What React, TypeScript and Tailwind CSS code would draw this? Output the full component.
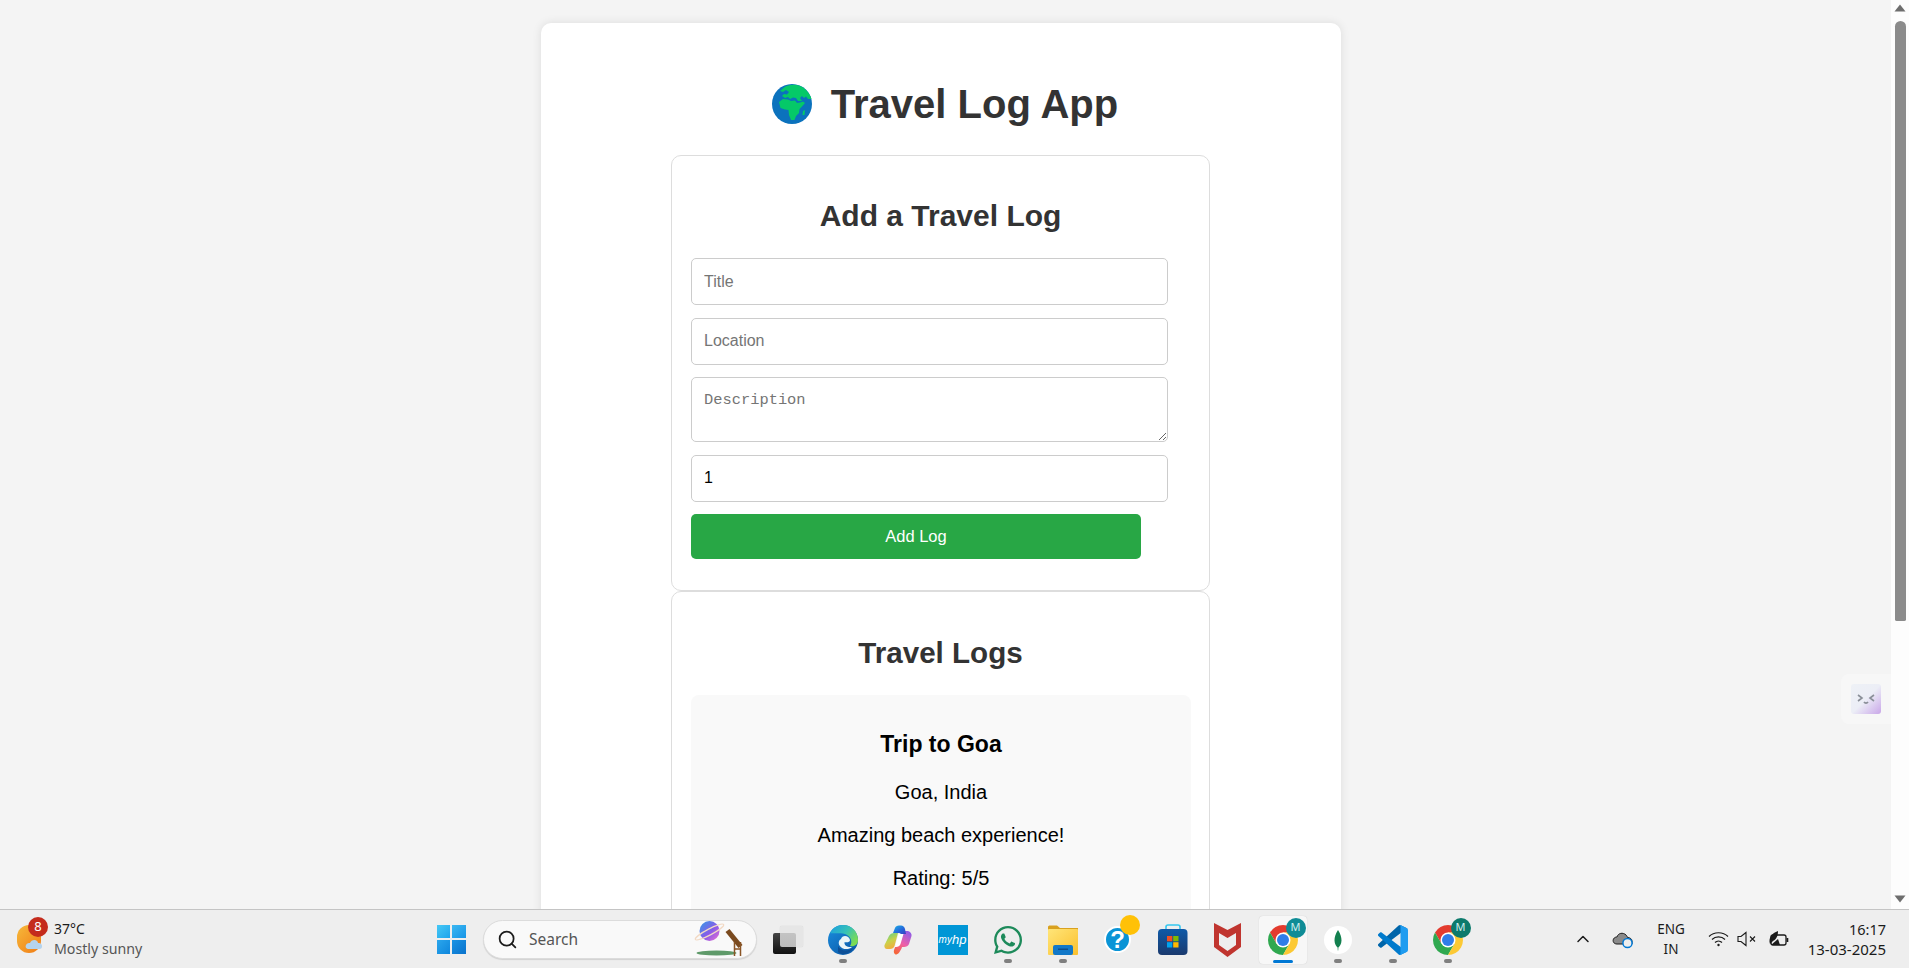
import { ChevronUp, Search } from 'lucide-react';
import { FaWhatsapp } from 'react-icons/fa';

function Globe() {
  return (
    <svg width="40" height="40" viewBox="0 0 40 40" className="shrink-0">
      <circle cx="20" cy="20" r="20" fill="#0b72bd" />
      <path
        d="M12 3.5 C17 0 27 -.5 33 5 C36 8 38.5 11 39.5 15 L36 15 L34 12.5 L32 14 L30 12 L28 14 L30 17 L26 17 L24 14 L21 13.5 L18 15 L16 13 L13 14 L10 12 L12 10 L15 10.5 L17 8 L14 6 L11 8 L8 7 Z"
        fill="#05c968"
      />
      <path
        d="M7 18 L11 15 L16 15.5 L19 17 L23 16.5 L25 19 L28 18.5 L31 17.5 L33 19 L30 22.5 L27.5 25 L27 29 L24 32 L22.5 36 L19 36 L17 31 L16.5 26 L13 25.5 L8.5 24 Z"
        fill="#05c968"
      />
      <path d="M31 27 L33 26 L32.5 31 L30.5 31 Z" fill="#05c968" />
    </svg>
  );
}

function Chrome({ size = 30 }: { size?: number }) {
  return (
    <svg width={size} height={size} viewBox="2 2 44 44">
      <path d="M4.95 13 A22 22 0 0 1 43.05 13 L24 13 L14.47 29.5 Z" fill="#e33b2e" />
      <path d="M4.95 13 L14.47 29.5 L33.53 29.5 L24 46 A22 22 0 0 1 4.95 13 Z" fill="#2fa84f" />
      <path d="M43.05 13 L24 13 L33.53 29.5 L24 46 A22 22 0 0 0 43.05 13 Z" fill="#fcc934" />
      <circle cx="24" cy="24" r="11" fill="#fff" />
      <circle cx="24" cy="24" r="8.8" fill="#2f7de8" />
    </svg>
  );
}

function VsCode() {
  return (
    <svg width="30" height="30" viewBox="0 0 100 100">
      <path
        d="M96.46 10.8 L75.86 .87 C73.47 -.28 70.62 .2 68.75 2.08 L1.3 63.58 C-.52 65.23 -.52 68.09 1.31 69.75 L6.82 74.75 C8.3 76.1 10.53 76.2 12.12 75 L93.39 13.35 C96.11 11.28 100 13.22 100 16.64 V16.4 C100 14 98.62 11.83 96.46 10.8 Z"
        fill="#0065a9"
      />
      <path
        d="M96.46 89.2 L75.86 99.13 C73.47 100.28 70.62 99.8 68.75 97.92 L1.3 36.42 C-.52 34.77 -.52 31.91 1.31 30.25 L6.82 25.25 C8.3 23.9 10.53 23.8 12.12 25 L93.39 86.65 C96.11 88.72 100 86.78 100 83.36 V83.6 C100 86 98.62 88.17 96.46 89.2 Z"
        fill="#007acc"
      />
      <path
        d="M75.86 99.13 C73.47 100.28 70.62 99.8 68.75 97.92 C71.06 100.23 75 98.6 75 95.33 V4.67 C75 1.4 71.06 -.23 68.75 2.08 C70.62 .2 73.47 -.28 75.86 .87 L96.46 10.78 C98.62 11.82 100 14 100 16.4 V83.6 C100 86 98.62 88.17 96.46 89.2 Z"
        fill="#1f9cf0"
      />
    </svg>
  );
}

function Edge() {
  return (
    <svg width="30" height="30" viewBox="0 0 30 30">
      <defs>
        <linearGradient id="edgeTop" x1="0" y1="0" x2="1" y2="0.6">
          <stop offset="0" stopColor="#1b9de2" />
          <stop offset="0.55" stopColor="#35c1b8" />
          <stop offset="1" stopColor="#7bdc55" />
        </linearGradient>
        <linearGradient id="edgeLeft" x1="0" y1="0" x2="0.7" y2="1">
          <stop offset="0" stopColor="#1a8fe0" />
          <stop offset="1" stopColor="#0b5cab" />
        </linearGradient>
      </defs>
      <circle cx="15" cy="15" r="15" fill="url(#edgeLeft)" />
      <path d="M2 8 C5 1 12 0 15 0 C24 0 30 7 30 15 C30 20 26 22 22 21 C25 17 23 10 15 8.5 C9 7.5 4 9 2 8 Z" fill="url(#edgeTop)" />
      <path d="M13 14 C14 9.5 21 10 22 15 C22 17.5 19 17.5 16.5 17.2 C16 20 19 22.5 24 22 C21 25 14 25 11.5 20.5 C10 18 11 15 13 14 Z" fill="#eaf5f8" />
      <path d="M10 21 C12 26 19 27 25.5 23 C22 29 14 31 10 27 Z" fill="#0d4f96" />
    </svg>
  );
}

function Copilot() {
  return (
    <svg width="28" height="30" viewBox="0 0 28 30">
      <defs>
        <linearGradient id="copA" x1="0" y1="0" x2="1" y2="1">
          <stop offset="0" stopColor="#19b3e6" />
          <stop offset="0.6" stopColor="#2563d9" />
          <stop offset="1" stopColor="#3b3fc0" />
        </linearGradient>
        <linearGradient id="copB" x1="0.2" y1="0" x2="0.6" y2="1">
          <stop offset="0" stopColor="#5fcf8a" />
          <stop offset="0.5" stopColor="#c9d24a" />
          <stop offset="1" stopColor="#f7a83c" />
        </linearGradient>
        <linearGradient id="copC" x1="0.8" y1="0" x2="0.3" y2="1">
          <stop offset="0" stopColor="#8f5be8" />
          <stop offset="0.55" stopColor="#ee5fa8" />
          <stop offset="1" stopColor="#f5663a" />
        </linearGradient>
      </defs>
      <path d="M5 11 C6 9 8 8 10 8 L14 8 L10.5 21 C10 23 8 24 6 24 L3 24 C1 24 0 22 .5 20 Z" fill="url(#copB)" />
      <path d="M18 22 C17.5 24 15 29 12.5 29.5 L11.5 29.5 C10 29 9.5 27 10 25 L12 20 L21 6 L24 6 C26.5 6.5 28 9 27.5 11 L25 19 C24.5 21 22 22 20 22 Z" fill="url(#copC)" />
      <path d="M9 8 L11 3 C11.5 1.5 13 .5 15 .5 L17 .5 C19 .5 20.5 2 21 4 L22 9 L17 9 L15.5 8 Z" fill="url(#copA)" />
      <path d="M14.5 9 L19.5 9 L16.5 19 C16 21 14 22 12 22 L10.8 22 Z" fill="#fff" />
    </svg>
  );
}

function Folder() {
  return (
    <svg width="30" height="30" viewBox="0 0 30 30">
      <defs>
        <linearGradient id="fold" x1="0" y1="0" x2="1" y2="1">
          <stop offset="0" stopColor="#ffe579" />
          <stop offset="1" stopColor="#fbc02d" />
        </linearGradient>
      </defs>
      <path d="M0 2 C0 1 1 .5 2 .5 H9 L12 3 H30 V6 H0 Z" fill="#d9a11f" />
      <rect x="0" y="4" width="30" height="26" rx="1" fill="url(#fold)" />
      <rect x="5" y="20" width="20" height="10" rx="2" fill="#1278c8" />
      <rect x="10" y="23.5" width="10" height="1.5" fill="#0b4f8f" />
    </svg>
  );
}

function Store() {
  return (
    <svg width="30" height="32" viewBox="0 0 30 32">
      <defs>
        <linearGradient id="bag" x1="0" y1="0" x2="0" y2="1">
          <stop offset="0" stopColor="#0f5aa8" />
          <stop offset="1" stopColor="#1a3a6e" />
        </linearGradient>
      </defs>
      <path d="M8 7 V3 C8 1.5 9 1 10 1 H20 C21 1 22 1.5 22 3 V7" fill="none" stroke="#35c7f0" strokeWidth="1.6" />
      <rect x="0" y="5" width="29.5" height="26" rx="4" fill="url(#bag)" />
      <rect x="9" y="12" width="5.3" height="5.3" fill="#f25022" />
      <rect x="15.2" y="12" width="5.3" height="5.3" fill="#7fba00" />
      <rect x="9" y="18.2" width="5.3" height="5.3" fill="#00a4ef" />
      <rect x="15.2" y="18.2" width="5.3" height="5.3" fill="#ffb900" />
    </svg>
  );
}

function Shield() {
  return (
    <svg width="27" height="34" viewBox="0 0 27 34">
      <path d="M0 0 L13.5 7 L27 0 V24 L13.5 34 L0 24 Z" fill="#c0352f" />
      <path d="M5 10 L13.5 15 L22 10 V22 L13.5 28 L5 22 Z" fill="#eeeeee" />
    </svg>
  );
}

function Mongo() {
  return (
    <svg width="28" height="28" viewBox="0 0 28 28">
      <circle cx="14" cy="14" r="14" fill="#fff" />
      <path d="M14 4 C16.5 8 17.5 11 17.5 14.5 C17.5 18 15.5 20.5 14.4 21.5 L14.2 24.5 H13.8 L13.6 21.5 C12.5 20.5 10.5 18 10.5 14.5 C10.5 11 11.5 8 14 4 Z" fill="#13804f" />
    </svg>
  );
}

function Planet() {
  return (
    <svg width="53" height="38" viewBox="0 0 50 38">
      <defs>
        <linearGradient id="pl" x1="0" y1="0" x2="1" y2="1">
          <stop offset="0" stopColor="#2f9be6" />
          <stop offset="0.55" stopColor="#8a5be8" />
          <stop offset="1" stopColor="#ef6fd0" />
        </linearGradient>
      </defs>
      <ellipse cx="22" cy="33" rx="20" ry="2.5" fill="#5f9a6a" />
      <circle cx="15" cy="11" r="10" fill="url(#pl)" />
      <ellipse cx="15" cy="12" rx="16" ry="3" fill="none" stroke="#f2d9c4" strokeWidth="1.2" transform="rotate(-28 15 12)" />
      <path d="M31 12 L35 9 L48 25 L44 28 Z" fill="#7a4a1f" />
      <path d="M40 22 V36 M46 22 V36 M40 29 H46" stroke="#8a5526" strokeWidth="1.5" fill="none" />
    </svg>
  );
}

function Slot({
  children,
  dot,
  active,
}: {
  children: React.ReactNode;
  dot?: boolean;
  active?: boolean;
}) {
  return (
    <div className="relative flex h-[59px] w-[55px] shrink-0 items-center justify-center pt-[1px]">
      {active && (
        <div className="absolute left-[3.5px] top-[6px] h-[48px] w-[48px] rounded-[4px] bg-[#f7f7f7] shadow-[0_0_1px_rgba(0,0,0,0.2)]" />
      )}
      <div className="relative flex items-center justify-center">{children}</div>
      {dot && <div className="absolute bottom-[5.5px] left-[23.5px] h-[4px] w-[8px] rounded-full bg-[#7f7f7f]" />}
      {active && <div className="absolute bottom-[6px] left-[18px] h-[3px] w-[20px] rounded-full bg-[#0078d4]" />}
    </div>
  );
}

function Badge({ bg, label }: { bg: string; label?: string }) {
  return (
    <div className={`absolute -right-[8px] -top-[7px] flex h-[20px] w-[20px] items-center justify-center rounded-full text-[11px] text-[#cfeeee] ${bg}`}>
      {label}
    </div>
  );
}

function Scrollbar() {
  return (
    <div className="flex w-[18px] shrink-0 flex-col items-center bg-[#fdfdfd]">
      <svg width="12" height="8" viewBox="0 0 12 8" className="mt-[4px]">
        <path d="M6 0.5 L11.5 7.5 H0.5 Z" fill="#6e6e6e" />
      </svg>
      <div className="mt-[9px] h-[600px] w-[11px] rounded-t-[6px] rounded-b-[2px] bg-[#8b8b8b]" />
      <svg width="12" height="8" viewBox="0 0 12 8" className="mt-auto mb-[6px]">
        <path d="M6 7.5 L11.5 0.5 H0.5 Z" fill="#6e6e6e" />
      </svg>
    </div>
  );
}

function Taskbar() {
  return (
    <div className="flex h-[59px] shrink-0 items-center border-t border-[#c4c4c4] bg-[#eeeeee] font-['Noto_Sans',sans-serif] text-[#1b1b1b]">
      {/* Weather */}
      <div className="flex w-[429px] shrink-0 items-center pl-[17px]">
        <div className="relative h-[30px] w-[37px]">
          <div className="absolute left-0 top-[1px] h-[28px] w-[24px] rounded-full bg-gradient-to-br from-[#f5b93a] to-[#f07a12]" />
          <svg width="18" height="12" viewBox="0 0 18 12" className="absolute left-[8px] top-[14px]">
            <path d="M4 11 C1 11 0 9 1 7 C2 5 4 5 5 5 C6 2 10 1 12 3 C13 4 13 5 13 5 C16 5 17.5 7 17 9 C16.5 11 15 11 14 11 Z" fill="#b5d4ee" />
          </svg>
          <div className="absolute left-[11px] -top-[7px] flex h-[20px] w-[20px] items-center justify-center rounded-full bg-[#c42b1c] text-[13px] text-white">8</div>
        </div>
        <div className="flex flex-col leading-[20px]">
          <span className="text-[14px]">37°C</span>
          <span className="text-[14.2px] text-[#555]">Mostly sunny</span>
        </div>
      </div>

      {/* Start */}
      <div className="flex w-[44px] shrink-0 justify-center">
        <div className="grid h-[29px] w-[29px] grid-cols-2 gap-[1.5px]">
          <div className="bg-gradient-to-br from-[#45c8f5] to-[#1ca4ec]" />
          <div className="bg-gradient-to-br from-[#3ab8f2] to-[#1594e6]" />
          <div className="bg-gradient-to-br from-[#2aa6ec] to-[#0d86dc]" />
          <div className="bg-gradient-to-br from-[#1a94e4] to-[#0a72cc]" />
        </div>
      </div>

      {/* Search */}
      <div className="ml-[10px] flex h-[39px] w-[274px] shrink-0 items-center rounded-full border border-[#dcdcdc] bg-[#f9f9f9] pl-[13px] pr-[10px] shadow-[0_1px_1px_rgba(0,0,0,0.12)]">
        <Search size={21} strokeWidth={2} className="text-[#1b1b1b]" />
        <span className="ml-[11px] flex-1 pt-[2px] text-[15.5px] text-[#555]">Search</span>
        <Planet />
      </div>

      {/* Pinned apps */}
      <div className="ml-[3px] flex">
        <Slot>
          <div className="relative h-[28px] w-[30px]">
            <div className="absolute bottom-0 left-0 h-[21px] w-[23px] rounded-[2px] bg-gradient-to-b from-[#454545] to-[#111]" />
            <div className="absolute right-0 top-0 h-[21px] w-[23px] rounded-[2px] bg-[#e4e4e4]/80 shadow-[0_0_1px_rgba(0,0,0,0.2)]" />
          </div>
        </Slot>
        <Slot dot>
          <Edge />
        </Slot>
        <Slot>
          <Copilot />
        </Slot>
        <Slot>
          <div className="flex h-[30px] w-[30px] items-center justify-center bg-[#0096d6] font-['Liberation_Sans',sans-serif] text-[10px] italic text-white">
            my<span className="text-[13px]">hp</span>
          </div>
        </Slot>
        <Slot dot>
          <FaWhatsapp size={32} className="text-[#1d8a5a]" />
        </Slot>
        <Slot dot>
          <Folder />
        </Slot>
        <Slot>
          <div className="relative flex h-[27px] w-[27px] items-center justify-center rounded-full border-[2px] border-white bg-[#0a94d6] font-['Liberation_Sans',sans-serif] text-[24px] font-bold text-white">
            ?
            <div className="absolute -right-[11px] -top-[13px] h-[20px] w-[20px] rounded-full bg-[#ffc107]" />
          </div>
        </Slot>
        <Slot>
          <Store />
        </Slot>
        <Slot>
          <Shield />
        </Slot>
        <Slot active>
          <Chrome />
          <Badge bg="bg-[#0f8c96]" label="M" />
        </Slot>
        <Slot dot>
          <Mongo />
        </Slot>
        <Slot dot>
          <VsCode />
        </Slot>
        <Slot dot>
          <Chrome />
          <Badge bg="bg-[#0c7a6c]" label="M" />
        </Slot>
      </div>

      {/* System tray */}
      <div className="ml-[88px] flex flex-1 items-center text-[#1b1b1b]">
        <div className="flex w-[40px] justify-center">
          <ChevronUp size={20} strokeWidth={1.8} />
        </div>
        <div className="flex w-[40px] justify-center">
          <svg width="22" height="20" viewBox="0 0 22 20">
            <path d="M5 15 C1.5 15 .5 12 1.5 10 C2.5 8 4.5 8 5 8 C6 4 11 3 14 6 C15 7 15.5 8 15.5 8.5 C18 8.5 20 10 20 12 L20 15 Z" fill="#8a8a8a" stroke="#1b1b1b" strokeWidth="1" />
            <circle cx="15.5" cy="14" r="4.6" fill="#eee" stroke="#0078d4" strokeWidth="1.5" />
          </svg>
        </div>
        <div className="flex w-[56px] flex-col items-center text-[13.5px] leading-[20px]">
          <span>ENG</span>
          <span>IN</span>
        </div>
        <div className="ml-[5px] flex w-[28px] justify-center">
          <svg width="21" height="16" viewBox="0 0 21 16" fill="none" stroke="#1b1b1b" strokeWidth="1.2">
            <path d="M1 5.5 C6 .5 15 .5 20 5.5" />
            <path d="M4 8.5 C7.5 5 13.5 5 17 8.5" />
            <path d="M7 11.5 C9 9.5 12 9.5 14 11.5" />
            <circle cx="10.5" cy="14" r="1.2" fill="#1b1b1b" stroke="none" />
          </svg>
        </div>
        <div className="ml-[1px] flex w-[28px] justify-center">
          <svg width="20" height="16" viewBox="0 0 20 16" fill="none" stroke="#1b1b1b" strokeWidth="1.1">
            <path d="M1 5.5 H4 L9 1.5 V14.5 L4 10.5 H1 Z" />
            <path d="M13 5.5 L18 10.5 M18 5.5 L13 10.5" />
          </svg>
        </div>
        <div className="ml-[3px] flex w-[28px] justify-center">
          <svg width="21" height="18" viewBox="0 0 21 18">
            <path d="M2 14 C0 8 4 3 10 1 C10 5 9 9 5 11" fill="#1b1b1b" />
            <rect x="3" y="5" width="15" height="10" rx="2" fill="none" stroke="#1b1b1b" strokeWidth="1.3" />
            <rect x="18.5" y="8" width="1.8" height="4" fill="#1b1b1b" />
            <path d="M3 15 L10 9 L12 15 Z" fill="#1b1b1b" />
          </svg>
        </div>
        <div className="flex flex-1 flex-col items-end pr-[23px] leading-[20px]">
          <span className="text-[14.5px]">16:17</span>
          <span className="text-[15px]">13-03-2025</span>
        </div>
      </div>
    </div>
  );
}

export default function App() {
  return (
    <div className="flex h-screen w-full flex-col overflow-hidden bg-[#f4f4f4] font-['Liberation_Sans',Arial,sans-serif]">
      <div className="flex min-h-0 flex-1">
        <main className="relative min-w-0 flex-1 overflow-hidden">
          <div className="ml-[541px] mt-[23px] w-[800px] rounded-[10px] bg-white pt-[56px] shadow-[0_0_10px_rgba(0,0,0,0.1)]">
            <h1 className="flex h-[50px] items-center justify-center gap-[19px] pl-[8px] text-[40px] font-bold text-[#333]">
              <Globe />
              <span>Travel Log App</span>
            </h1>

            {/* Add form */}
            <section className="ml-[130px] mt-[26px] h-[436px] w-[539px] rounded-[10px] border border-[#ddd] px-[19px] pt-[40px]">
              <h2 className="text-center text-[30px] font-bold leading-[40px] text-[#333]">Add a Travel Log</h2>
              <form className="mt-[22px] flex flex-col gap-[12.5px]">
                <input
                  type="text"
                  placeholder="Title"
                  className="h-[47px] w-[477px] rounded-[5px] border border-[#ccc] px-[12px] text-[16px] outline-none placeholder:text-[#757575]"
                />
                <input
                  type="text"
                  placeholder="Location"
                  className="h-[47px] w-[477px] rounded-[5px] border border-[#ccc] px-[12px] text-[16px] outline-none placeholder:text-[#757575]"
                />
                <textarea
                  placeholder="Description"
                  className="block h-[65px] w-[477px] rounded-[5px] border border-[#ccc] px-[12px] pt-[14px] font-['Liberation_Mono',monospace] text-[15.4px] leading-[17px] outline-none placeholder:text-[#757575]"
                />
                <input
                  type="number"
                  defaultValue={1}
                  className="h-[47px] w-[477px] rounded-[5px] border border-[#ccc] px-[12px] text-[16px] text-black outline-none"
                />
                <button type="button" className="h-[45px] w-[450px] rounded-[5px] bg-[#28a745] text-[16.5px] text-white">
                  Add Log
                </button>
              </form>
            </section>

            {/* Logs */}
            <section className="ml-[130px] h-[500px] w-[539px] rounded-[10px] border border-[#ddd] px-[19px] pt-[41px]">
              <h2 className="text-center text-[29.6px] font-bold leading-[40px] text-[#333]">Travel Logs</h2>
              <div className="mt-[22px] w-[500px] rounded-[8px] bg-[#f9f9f9] pt-[35px] text-center text-black">
                <h3 className="text-[23px] font-bold leading-[28px]">Trip to Goa</h3>
                <p className="mt-[23px] text-[20px] leading-[23px]">Goa, India</p>
                <p className="mt-[20px] text-[20px] leading-[23px]">Amazing beach experience!</p>
                <p className="mt-[20px] text-[20px] leading-[23px]">Rating: 5/5</p>
                <div className="h-[40px]" />
              </div>
            </section>
          </div>

          {/* Floating helper tab */}
          <div className="absolute right-0 top-[674px] flex h-[50px] w-[50px] items-center justify-center rounded-l-[8px] bg-[#f7f7f7]">
            <div className="flex h-[30px] w-[30px] items-center justify-center rounded-[3px] bg-gradient-to-br from-[#eef1f6] via-[#eceef6] to-[#c9a6e8]">
              <svg width="18" height="12" viewBox="0 0 18 12" fill="none" stroke="#8a8f98" strokeWidth="1.6">
                <path d="M1 2 L5 5 L1 8" />
                <path d="M17 2 L13 5 L17 8" />
                <path d="M7 9 C8 10.5 10 10.5 11 9" />
              </svg>
            </div>
          </div>
        </main>
        <Scrollbar />
      </div>
      <Taskbar />
    </div>
  );
}
